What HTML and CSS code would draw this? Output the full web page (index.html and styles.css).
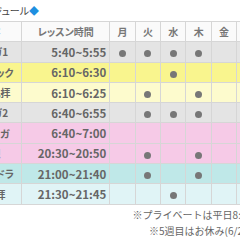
FILE: index.html
```html
<!DOCTYPE html>
<html lang="ja">
<head>
<meta charset="utf-8">
<title>レッスンスケジュール</title>
<link rel="stylesheet" href="styles.css">
</head>
<body>
<div class="page">
  <h2 class="title">スケジュール<span class="dia">◆</span></h2>
  <table class="sched">
    <colgroup>
      <col class="c-name">
      <col class="c-time">
      <col class="c-day"><col class="c-day"><col class="c-day"><col class="c-day"><col class="c-day"><col class="c-day"><col class="c-day">
    </colgroup>
    <thead>
      <tr><th>内容</th><th>レッスン時間</th><th>月</th><th>火</th><th>水</th><th>木</th><th>金</th><th>土</th><th>日</th></tr>
    </thead>
    <tbody>
      <tr class="grey"><td>朝ヨガ1</td><td class="time">5:40~5:55</td><td><i class="dot"></i></td><td><i class="dot"></i></td><td><i class="dot"></i></td><td><i class="dot"></i></td><td></td><td></td><td></td></tr>
      <tr class="yellow"><td>ベーシック</td><td class="time">6:10~6:30</td><td></td><td></td><td><i class="dot"></i></td><td></td><td></td><td></td><td></td></tr>
      <tr class="lyellow"><td>太陽礼拝</td><td class="time">6:10~6:25</td><td></td><td><i class="dot"></i></td><td></td><td><i class="dot"></i></td><td></td><td></td><td></td></tr>
      <tr class="grey"><td>朝ヨガ2</td><td class="time">6:40~6:55</td><td></td><td><i class="dot"></i></td><td><i class="dot"></i></td><td><i class="dot"></i></td><td></td><td></td><td></td></tr>
      <tr class="pink"><td>ゆるヨガ</td><td class="time">6:40~7:00</td><td></td><td></td><td></td><td></td><td></td><td><i class="dot"></i></td><td></td></tr>
      <tr class="pink"><td>瞑想</td><td class="time">20:30~20:50</td><td></td><td><i class="dot"></i></td><td></td><td><i class="dot"></i></td><td></td><td></td><td></td></tr>
      <tr class="cyan"><td>ヨガニドラ</td><td class="time">21:00~21:40</td><td></td><td><i class="dot"></i></td><td></td><td><i class="dot"></i></td><td></td><td></td><td></td></tr>
      <tr class="lcyan"><td>月礼拝</td><td class="time">21:30~21:45</td><td></td><td></td><td><i class="dot"></i></td><td></td><td></td><td></td><td></td></tr>
    </tbody>
  </table>
  <div class="notes">
    <p>※プライベートは平日8:00〜21:00</p>
    <p>※5週目はお休み(6/29 〜 6/30)</p>
  </div>
</div>
</body>
</html>
```
FILE: styles.css
```css
html, body {
  margin: 0;
  padding: 0;
  overflow: hidden;
  background: #fff;
}
body {
  width: 240px;
  height: 240px;
  font-family: "Noto Sans CJK JP", sans-serif;
  color: #666;
}
.page {
  margin-left: -41px;
  width: 328px;
}
.title {
  margin: 0;
  padding-left: 15px;
  height: 21px;
  font-size: 10px;
  line-height: 21px;
  font-weight: normal;
  color: #444;
  font-feature-settings: "palt";
}
.dia {
  color: #1e8fe0;
}
.sched {
  border-collapse: collapse;
  table-layout: fixed;
  width: 328px;
  font-feature-settings: "palt";
}
.c-name { width: 62px; }
.c-time { width: 88.3px; }
.c-day { width: 25.4px; }
.sched th,
.sched td {
  border: 1px solid #d6d6d6;
  padding: 0;
  height: 19.3px;
  text-align: center;
  font-weight: bold;
  white-space: nowrap;
  overflow: hidden;
}
.sched th {
  background: #fafafa;
  font-size: 10px;
  color: #777;
}
.sched td {
  font-size: 10px;
}
.sched td.time {
  text-align: right;
  padding-right: 3px;
  font-size: 11.5px;
  color: #666;
}
.grey td { background: #e4e4e4; }
.yellow td { background: #f9f58e; }
.lyellow td { background: #fdfbcd; }
.pink td { background: #f6cae7; }
.cyan td { background: #bfe8e8; }
.lcyan td { background: #e0f4f6; }
.dot {
  display: inline-block;
  width: 7px;
  height: 7px;
  border-radius: 50%;
  background: #777;
  vertical-align: middle;
}
.notes {
  text-align: right;
  font-size: 10px;
  color: #666;
  padding-top: 2px;
}
.notes p {
  margin: 0;
  line-height: 16px;
}
```
